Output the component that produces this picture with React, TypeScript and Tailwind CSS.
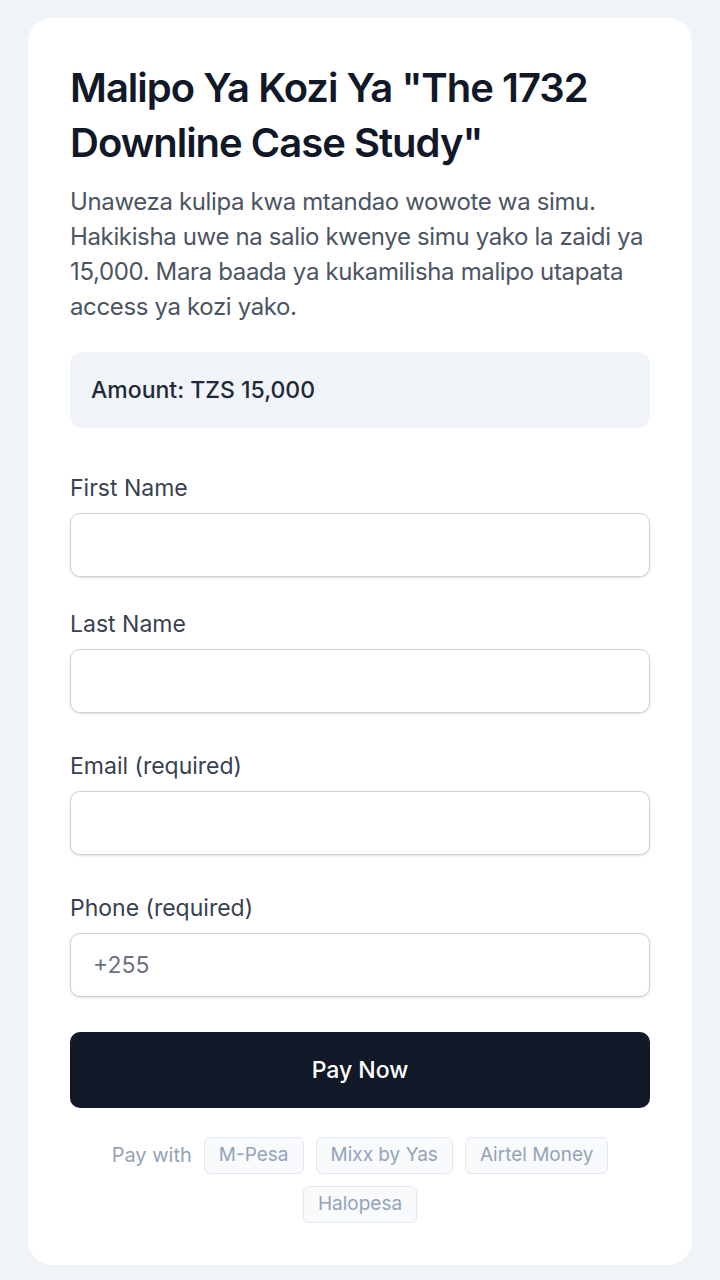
import { useState } from "react";

const fields = [
  { key: "first", label: "First Name", gap: "mt-[45px]", placeholder: "" },
  { key: "last", label: "Last Name", gap: "mt-[32px]", placeholder: "" },
  { key: "email", label: "Email (required)", gap: "mt-[38px]", placeholder: "" },
  { key: "phone", label: "Phone (required)", gap: "mt-[38px]", placeholder: "+255" },
];

const networks = ["M-Pesa", "Mixx by Yas", "Airtel Money", "Halopesa"];

export default function App() {
  const [values, setValues] = useState<Record<string, string>>({});

  return (
    <div className="min-h-screen bg-[#f0f4f9] px-[28px] pt-[18px] pb-[15px] font-['Inter',sans-serif]">
      <div className="rounded-[24px] bg-white px-[42px] pt-[42px] pb-[42px]">
        <h1 className="text-[40px] leading-[55px] font-semibold tracking-[-0.025em] text-[#111827]">
          Malipo Ya Kozi Ya "The 1732 Downline Case Study"
        </h1>
        <p className="mt-[14px] text-[24px] leading-[35px] tracking-[-0.015em] text-[#4b5563]">
          Unaweza kulipa kwa mtandao wowote wa simu. Hakikisha uwe na salio kwenye simu yako la zaidi ya 15,000. Mara
          baada ya kukamilisha malipo utapata access ya kozi yako.
        </p>

        <div className="mt-[28px] flex h-[76px] items-center rounded-[12px] bg-[#f0f4f9] px-[21px]">
          <span className="text-[23px] font-medium text-[#1f2937]">Amount: TZS 15,000</span>
        </div>

        {fields.map((f) => (
          <div key={f.key} className={f.gap}>
            <label className="block text-[23px] leading-[30px] text-[#374151]">{f.label}</label>
            <input
              type="text"
              value={values[f.key] ?? ""}
              placeholder={f.placeholder}
              onChange={(e) => setValues({ ...values, [f.key]: e.target.value })}
              className="mt-[10px] block h-[64px] w-full rounded-[10px] border border-[#cdd3dc] bg-white px-[22px] text-[23px] text-[#111827] shadow-sm placeholder:text-[#6b7280] outline-none"
            />
          </div>
        ))}

        <button
          type="button"
          className="mt-[35px] flex h-[76px] w-full items-center justify-center rounded-[10px] bg-[#111827] text-[23px] font-medium text-white"
        >
          Pay Now
        </button>

        <div className="mt-[29px] flex flex-wrap items-center justify-center gap-[12px]">
          <span className="text-[20px] leading-[37px] text-[#94a3b8]">Pay with</span>
          {networks.map((n) => (
            <span
              key={n}
              className="flex h-[37px] items-center rounded-[6px] border border-[#e2e8f0] bg-[#f8fafc] px-[14px] text-[19px] text-[#94a3b8]"
            >
              {n}
            </span>
          ))}
        </div>
      </div>
    </div>
  );
}
